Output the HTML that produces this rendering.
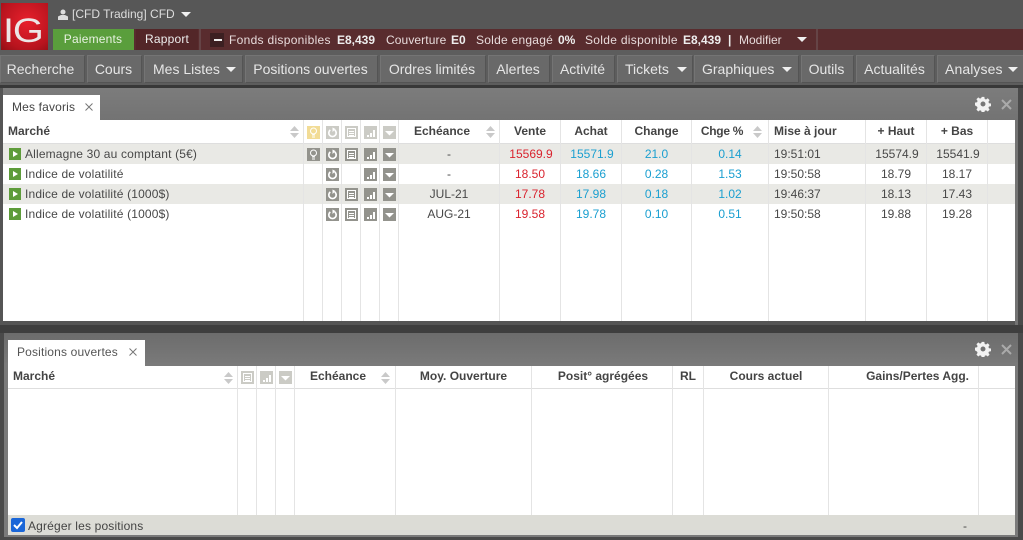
<!DOCTYPE html>
<html><head><meta charset="utf-8"><style>
html,body{margin:0;padding:0}
body{width:1023px;height:540px;overflow:hidden;position:relative;background:#4a4a4a;font-family:"Liberation Sans",sans-serif;font-size:12px;color:#333}
div,span,svg{position:absolute;white-space:nowrap}
.nb{top:55px;height:28px;background:#696969;border:1px solid #747474;border-right-color:#545454;border-bottom-color:#545454;box-sizing:border-box;color:#e6e6e6;font-size:14px;line-height:26px;text-align:center;padding-right:2px}
.ar{width:0;height:0;border-left:5px solid transparent;border-right:5px solid transparent;border-top:5px solid #f0f0f0}
.t{color:#e8dcdc;top:33px;line-height:14px}
.t b{color:#eee}
.v{position:absolute;width:1px;background:#e4e4e4}
.h{font-weight:bold;color:#444;line-height:14px;text-align:center}
.c{line-height:14px;text-align:center;color:#484848}
.m{letter-spacing:.16px}
.r{color:#d9232e}.b{color:#1a9fd0}
.row{left:3px;width:1012px;height:20px}
.pl{width:12px;height:12px;left:9px;background:#5e9c3a}
.pl:after{content:"";position:absolute;left:4px;top:2.5px;border-left:5px solid #fff;border-top:3.5px solid transparent;border-bottom:3.5px solid transparent}
.ic{width:13px;height:13px;background:#93938d}
.l{background:#cbcbc5}
.sort{width:9px;height:14px}
</style></head><body>
<svg width="0" height="0" style="position:absolute"><defs>
<symbol id="a" viewBox="0 0 13 13"><path d="M4.300 3.900A3.700 3.700 0 1 0 8.700 3.900" fill="none" stroke="#fff" stroke-width="1.700"/><path d="M6.500 1.500L6.500 6L9.500 3z" fill="#fff"/></symbol>
<symbol id="n" viewBox="0 0 13 13"><path d="M2.500 2.500h8v8h-8z M4 5.500h5M4 7.500h5M4 9.500h5" fill="none" stroke="#fff" stroke-width="1"/></symbol>
<symbol id="g" viewBox="0 0 13 13"><path d="M3 9h2v2H3zM6 7h2v4H6zM9 4h2v7H9z" fill="#fff"/></symbol>
<symbol id="d" viewBox="0 0 13 13"><path d="M2 5h9l-4.500 4.500z" fill="#fff"/></symbol>
<symbol id="s" viewBox="0 0 9 14"><path d="M4.500 1L9 6H0z M0 8h9l-4.500 5z" fill="#c9c9c9"/></symbol>
<symbol id="gear" viewBox="-1 -1 18 18"><path d="M6.500 0h3l.4 2.300 1.500.6 1.900-1.300 2.100 2.100-1.300 1.900.6 1.500 2.300.4v3l-2.300.4-.6 1.500 1.300 1.900-2.100 2.100-1.900-1.300-1.500.6-.4 2.300h-3l-.4-2.300-1.500-.6-1.900 1.300-2.100-2.100 1.300-1.900-.6-1.500L-1 9.500v-3l2.300-.4.6-1.500L.6 2.700 2.700.6l1.900 1.300 1.500-.6zM8 5.200A2.800 2.800 0 1 0 8 10.800 2.800 2.800 0 1 0 8 5.200z" fill="#f2f2f2" fill-rule="evenodd"/></symbol>
<symbol id="x" viewBox="0 0 11 11"><path d="M1 1l9 9M10 1l-9 9" stroke="#aaa" stroke-width="2"/></symbol>
<symbol id="tx" viewBox="0 0 8 8"><path d="M.5 .5l7 7M7.500 .5l-7 7" stroke="#777" stroke-width="1"/></symbol>
</defs></svg>

<!-- top -->
<div style="left:0;top:0;width:1023px;height:50px;background:#575757"></div>
<div style="left:1px;top:3px;width:47px;height:47px;background:radial-gradient(circle at 55% 40%,#e8202c,#b8141e 70%,#8f0f15)"></div>
<div style="left:3px;top:12px;font-size:34px;line-height:38px;color:#ece6e6;letter-spacing:-1px;transform-origin:0 0;transform:scaleX(1.170)">IG</div>
<svg style="left:58px;top:9px" width="10" height="11"><circle cx="5" cy="3" r="2.500" fill="#ddd"/><path d="M0 11V7.500L3 6h4l3 1.500V11z" fill="#ddd"/></svg>
<div style="left:72px;top:7px;color:#ddd;line-height:14px">[CFD Trading] CFD</div>
<div class="ar" style="left:181px;top:12px"></div>
<div style="left:134px;top:29px;width:889px;height:21px;background:#592c2e"></div>
<div style="left:53px;top:29px;width:81px;height:21px;background:#5a9e3c;color:#e8f2e2;line-height:21px;text-align:center;letter-spacing:.2px;padding-right:1px;box-sizing:border-box">Paiements</div>
<div style="left:136px;top:29px;width:62px;height:21px;background:#532628;color:#eee;line-height:21px;text-align:center;letter-spacing:.2px">Rapport</div>
<div style="left:199px;top:29px;width:2px;height:21px;background:#654446"></div>
<div style="left:816px;top:29px;width:2px;height:21px;background:#654446"></div>
<div style="left:210px;top:33px;width:14px;height:14px;background:#3c2022"></div>
<div style="left:214px;top:39px;width:8px;height:2px;background:#eee"></div>
<div class="t" style="left:229px;letter-spacing:.3px">Fonds disponibles</div>
<div class="t" style="left:337px"><b>E8,439</b></div>
<div class="t" style="left:386px;letter-spacing:.1px">Couverture</div>
<div class="t" style="left:451px"><b>E0</b></div>
<div class="t" style="left:476px;letter-spacing:.25px">Solde engagé</div>
<div class="t" style="left:558px"><b>0%</b></div>
<div class="t" style="left:585px;letter-spacing:.3px">Solde disponible</div>
<div class="t" style="left:683px"><b>E8,439</b></div>
<div class="t" style="left:728px"><b>|</b></div>
<div class="t" style="left:739px">Modifier</div>
<div class="ar" style="left:797px;top:37px"></div>

<!-- nav -->
<div style="left:0;top:50px;width:1023px;height:35px;background:#5d5d5d"></div>
<div style="left:0;top:85px;width:1023px;height:3px;background:#383838"></div>
<div class="nb" style="left:0;width:85px;padding-right:4px">Recherche</div>
<div class="nb" style="left:87px;width:55px">Cours</div>
<div class="nb" style="left:144px;width:99px;text-align:left;padding-left:8px">Mes Listes</div><div class="ar" style="left:226px;top:67px"></div>
<div class="nb" style="left:245px;width:133px">Positions ouvertes</div>
<div class="nb" style="left:380px;width:106px">Ordres limités</div>
<div class="nb" style="left:488px;width:62px">Alertes</div>
<div class="nb" style="left:552px;width:63px">Activité</div>
<div class="nb" style="left:617px;width:76px;text-align:left;padding-left:7px">Tickets</div><div class="ar" style="left:677px;top:67px"></div>
<div class="nb" style="left:694px;width:105px;text-align:left;padding-left:7px">Graphiques</div><div class="ar" style="left:782px;top:67px"></div>
<div class="nb" style="left:801px;width:53px">Outils</div>
<div class="nb" style="left:856px;width:79px">Actualités</div>
<div class="nb" style="left:937px;width:90px;text-align:left;padding-left:7px;letter-spacing:.1px">Analyses</div><div class="ar" style="left:1008px;top:67px"></div>

<!-- panel 1 -->
<div style="left:0;top:88px;width:1018px;height:237px;background:linear-gradient(#7c7c7c,#737373 32px)"></div>
<div style="left:1018px;top:88px;width:5px;height:245px;background:#4a4a4a"></div>
<div style="left:0;top:88px;width:3px;height:237px;background:#555"></div>
<div style="left:3px;top:95px;width:97px;height:26px;background:#fff"></div>
<div style="left:0;top:325px;width:1023px;height:8px;background:#3e3e3e"></div>
<div class="m" style="left:12px;top:100px;line-height:14px;color:#444">Mes favoris</div>
<svg style="left:85px;top:103px" width="8" height="8"><use href="#tx"/></svg>
<svg style="left:975px;top:96px" width="16" height="16"><use href="#gear"/></svg>
<svg style="left:1001px;top:99px" width="11" height="11"><use href="#x"/></svg>
<div style="left:3px;top:120px;width:1012px;height:201px;background:#fff"></div>
<div style="left:3px;top:321px;width:1012px;height:4px;background:#555"></div>
<div class="row" style="top:143px;height:21px;background:#e9e9e5"></div>
<div class="row" style="top:184px;background:#e9e9e5"></div>
<div style="left:3px;top:143px;width:1012px;height:1px;background:#dedede"></div>

<div class="v" style="left:303px;top:120px;height:201px"></div>
<div class="v" style="left:322px;top:120px;height:201px"></div>
<div class="v" style="left:341px;top:120px;height:201px"></div>
<div class="v" style="left:360px;top:120px;height:201px"></div>
<div class="v" style="left:379px;top:120px;height:201px"></div>
<div class="v" style="left:398px;top:120px;height:201px"></div>
<div class="v" style="left:499px;top:120px;height:201px"></div>
<div class="v" style="left:560px;top:120px;height:201px"></div>
<div class="v" style="left:621px;top:120px;height:201px"></div>
<div class="v" style="left:691px;top:120px;height:201px"></div>
<div class="v" style="left:768px;top:120px;height:201px"></div>
<div class="v" style="left:865px;top:120px;height:201px"></div>
<div class="v" style="left:926px;top:120px;height:201px"></div>
<div class="v" style="left:987px;top:120px;height:201px"></div>

<div class="h" style="left:8px;top:124px">Marché</div>
<svg class="sort" style="left:290px;top:125px"><use href="#s"/></svg>
<div class="ic" style="left:307px;top:126px;background:#f2dc96"><svg width="13" height="13"><circle cx="6.500" cy="5" r="3" fill="none" stroke="#fff"/><path d="M5 9h3M5 11h3" stroke="#fff"/></svg></div>
<div class="ic l" style="left:326px;top:126px"><svg width="13" height="13"><use href="#a"/></svg></div>
<div class="ic l" style="left:345px;top:126px"><svg width="13" height="13"><use href="#n"/></svg></div>
<div class="ic l" style="left:364px;top:126px"><svg width="13" height="13"><use href="#g"/></svg></div>
<div class="ic l" style="left:383px;top:126px"><svg width="13" height="13"><use href="#d"/></svg></div>
<div class="h" style="left:399px;width:86px;top:124px">Echéance</div>
<svg class="sort" style="left:486px;top:125px"><use href="#s"/></svg>
<div class="h" style="left:500px;width:60px;top:124px">Vente</div>
<div class="h" style="left:561px;width:60px;top:124px">Achat</div>
<div class="h" style="left:622px;width:69px;top:124px">Change</div>
<div class="h" style="left:692px;width:60px;top:124px;letter-spacing:-.3px">Chge %</div>
<svg class="sort" style="left:753px;top:125px"><use href="#s"/></svg>
<div class="h" style="left:774px;top:124px">Mise à jour</div>
<div class="h" style="left:866px;width:60px;top:124px">+ Haut</div>
<div class="h" style="left:927px;width:60px;top:124px">+ Bas</div>

<div class="pl" style="top:148px"></div><div class="c m" style="left:25px;top:147px">Allemagne 30 au comptant (5€)</div>
<div class="pl" style="top:168px"></div><div class="c m" style="left:25px;top:167px">Indice de volatilité</div>
<div class="pl" style="top:188px"></div><div class="c m" style="left:25px;top:187px">Indice de volatilité (1000$)</div>
<div class="pl" style="top:208px"></div><div class="c m" style="left:25px;top:207px">Indice de volatilité (1000$)</div>

<div class="ic" style="left:307px;top:148px"><svg width="13" height="13"><circle cx="6.500" cy="5" r="3" fill="none" stroke="#fff"/><path d="M5 9h3M5 11h3" stroke="#fff"/></svg></div>
<div class="ic" style="left:326px;top:148px"><svg width="13" height="13"><use href="#a"/></svg></div>
<div class="ic" style="left:345px;top:148px"><svg width="13" height="13"><use href="#n"/></svg></div>
<div class="ic" style="left:364px;top:148px"><svg width="13" height="13"><use href="#g"/></svg></div>
<div class="ic" style="left:383px;top:148px"><svg width="13" height="13"><use href="#d"/></svg></div>

<div class="ic" style="left:326px;top:168px"><svg width="13" height="13"><use href="#a"/></svg></div>
<div class="ic" style="left:364px;top:168px"><svg width="13" height="13"><use href="#g"/></svg></div>
<div class="ic" style="left:383px;top:168px"><svg width="13" height="13"><use href="#d"/></svg></div>

<div class="ic" style="left:326px;top:188px"><svg width="13" height="13"><use href="#a"/></svg></div>
<div class="ic" style="left:345px;top:188px"><svg width="13" height="13"><use href="#n"/></svg></div>
<div class="ic" style="left:364px;top:188px"><svg width="13" height="13"><use href="#g"/></svg></div>
<div class="ic" style="left:383px;top:188px"><svg width="13" height="13"><use href="#d"/></svg></div>

<div class="ic" style="left:326px;top:208px"><svg width="13" height="13"><use href="#a"/></svg></div>
<div class="ic" style="left:345px;top:208px"><svg width="13" height="13"><use href="#n"/></svg></div>
<div class="ic" style="left:364px;top:208px"><svg width="13" height="13"><use href="#g"/></svg></div>
<div class="ic" style="left:383px;top:208px"><svg width="13" height="13"><use href="#d"/></svg></div>

<div class="c" style="left:399px;width:100px;top:147px">-</div>
<div class="c r" style="left:501px;width:60px;top:147px">15569.9</div>
<div class="c b" style="left:562px;width:60px;top:147px">15571.9</div>
<div class="c b" style="left:622px;width:69px;top:147px">21.0</div>
<div class="c b" style="left:692px;width:76px;top:147px">0.14</div>
<div class="c" style="left:774px;top:147px">19:51:01</div>
<div class="c" style="left:867px;width:60px;top:147px">15574.9</div>
<div class="c" style="left:928px;width:60px;top:147px">15541.9</div>

<div class="c" style="left:399px;width:100px;top:167px">-</div>
<div class="c r" style="left:500px;width:60px;top:167px">18.50</div>
<div class="c b" style="left:561px;width:60px;top:167px">18.66</div>
<div class="c b" style="left:622px;width:69px;top:167px">0.28</div>
<div class="c b" style="left:692px;width:76px;top:167px">1.53</div>
<div class="c" style="left:774px;top:167px">19:50:58</div>
<div class="c" style="left:866px;width:60px;top:167px">18.79</div>
<div class="c" style="left:927px;width:60px;top:167px">18.17</div>

<div class="c" style="left:399px;width:100px;top:187px">JUL-21</div>
<div class="c r" style="left:500px;width:60px;top:187px">17.78</div>
<div class="c b" style="left:561px;width:60px;top:187px">17.98</div>
<div class="c b" style="left:622px;width:69px;top:187px">0.18</div>
<div class="c b" style="left:692px;width:76px;top:187px">1.02</div>
<div class="c" style="left:774px;top:187px">19:46:37</div>
<div class="c" style="left:866px;width:60px;top:187px">18.13</div>
<div class="c" style="left:927px;width:60px;top:187px">17.43</div>

<div class="c" style="left:399px;width:100px;top:207px">AUG-21</div>
<div class="c r" style="left:500px;width:60px;top:207px">19.58</div>
<div class="c b" style="left:561px;width:60px;top:207px">19.78</div>
<div class="c b" style="left:622px;width:69px;top:207px">0.10</div>
<div class="c b" style="left:692px;width:76px;top:207px">0.51</div>
<div class="c" style="left:774px;top:207px">19:50:58</div>
<div class="c" style="left:866px;width:60px;top:207px">19.88</div>
<div class="c" style="left:927px;width:60px;top:207px">19.28</div>

<!-- panel 2 -->
<div style="left:4px;top:333px;width:1014px;height:204px;background:linear-gradient(#6c6c6c,#7a7a7a 32px)"></div>
<div style="left:0;top:333px;width:4px;height:207px;background:#4a4a4a"></div>
<div style="left:8px;top:340px;width:137px;height:26px;background:#fff"></div>
<div class="m" style="left:17px;top:345px;line-height:14px;color:#555">Positions ouvertes</div>
<svg style="left:129px;top:348px" width="8" height="8"><use href="#tx"/></svg>
<svg style="left:975px;top:341px" width="16" height="16"><use href="#gear"/></svg>
<svg style="left:1001px;top:344px" width="11" height="11"><use href="#x"/></svg>
<div style="left:8px;top:366px;width:1007px;height:149px;background:#fff"></div>
<div style="left:8px;top:388px;width:1007px;height:1px;background:#dedede"></div>
<div class="v" style="left:237px;top:366px;height:149px"></div>
<div class="v" style="left:256px;top:366px;height:149px"></div>
<div class="v" style="left:275px;top:366px;height:149px"></div>
<div class="v" style="left:294px;top:366px;height:149px"></div>
<div class="v" style="left:395px;top:366px;height:149px"></div>
<div class="v" style="left:531px;top:366px;height:149px"></div>
<div class="v" style="left:672px;top:366px;height:149px"></div>
<div class="v" style="left:703px;top:366px;height:149px"></div>
<div class="v" style="left:828px;top:366px;height:149px"></div>
<div class="v" style="left:978px;top:366px;height:149px"></div>
<div class="h" style="left:13px;top:369px">Marché</div>
<svg class="sort" style="left:224px;top:371px"><use href="#s"/></svg>
<div class="ic l" style="left:241px;top:371px"><svg width="13" height="13"><use href="#n"/></svg></div>
<div class="ic l" style="left:260px;top:371px"><svg width="13" height="13"><use href="#g"/></svg></div>
<div class="ic l" style="left:279px;top:371px"><svg width="13" height="13"><use href="#d"/></svg></div>
<div class="h" style="left:295px;width:86px;top:369px">Echéance</div>
<svg class="sort" style="left:381px;top:371px"><use href="#s"/></svg>
<div class="h" style="left:396px;width:135px;top:369px">Moy. Ouverture</div>
<div class="h" style="left:533px;width:140px;top:369px">Posit° agrégées</div>
<div class="h" style="left:673px;width:30px;top:369px">RL</div>
<div class="h" style="left:704px;width:124px;top:369px">Cours actuel</div>
<div class="h" style="left:829px;width:140px;top:369px;text-align:right">Gains/Pertes Agg.</div>
<div style="left:8px;top:515px;width:1007px;height:20px;background:#dcdcd6"></div>
<div style="left:11px;top:518px;width:14px;height:14px;background:#1a66d8;border-radius:2px"><svg width="14" height="14"><path d="M3 7l3 3 5-6" fill="none" stroke="#fff" stroke-width="2"/></svg></div>
<div class="m" style="left:28px;top:519px;line-height:14px;color:#444">Agréger les positions</div>
<div class="c" style="left:963px;top:519px">-</div>
</body></html>
